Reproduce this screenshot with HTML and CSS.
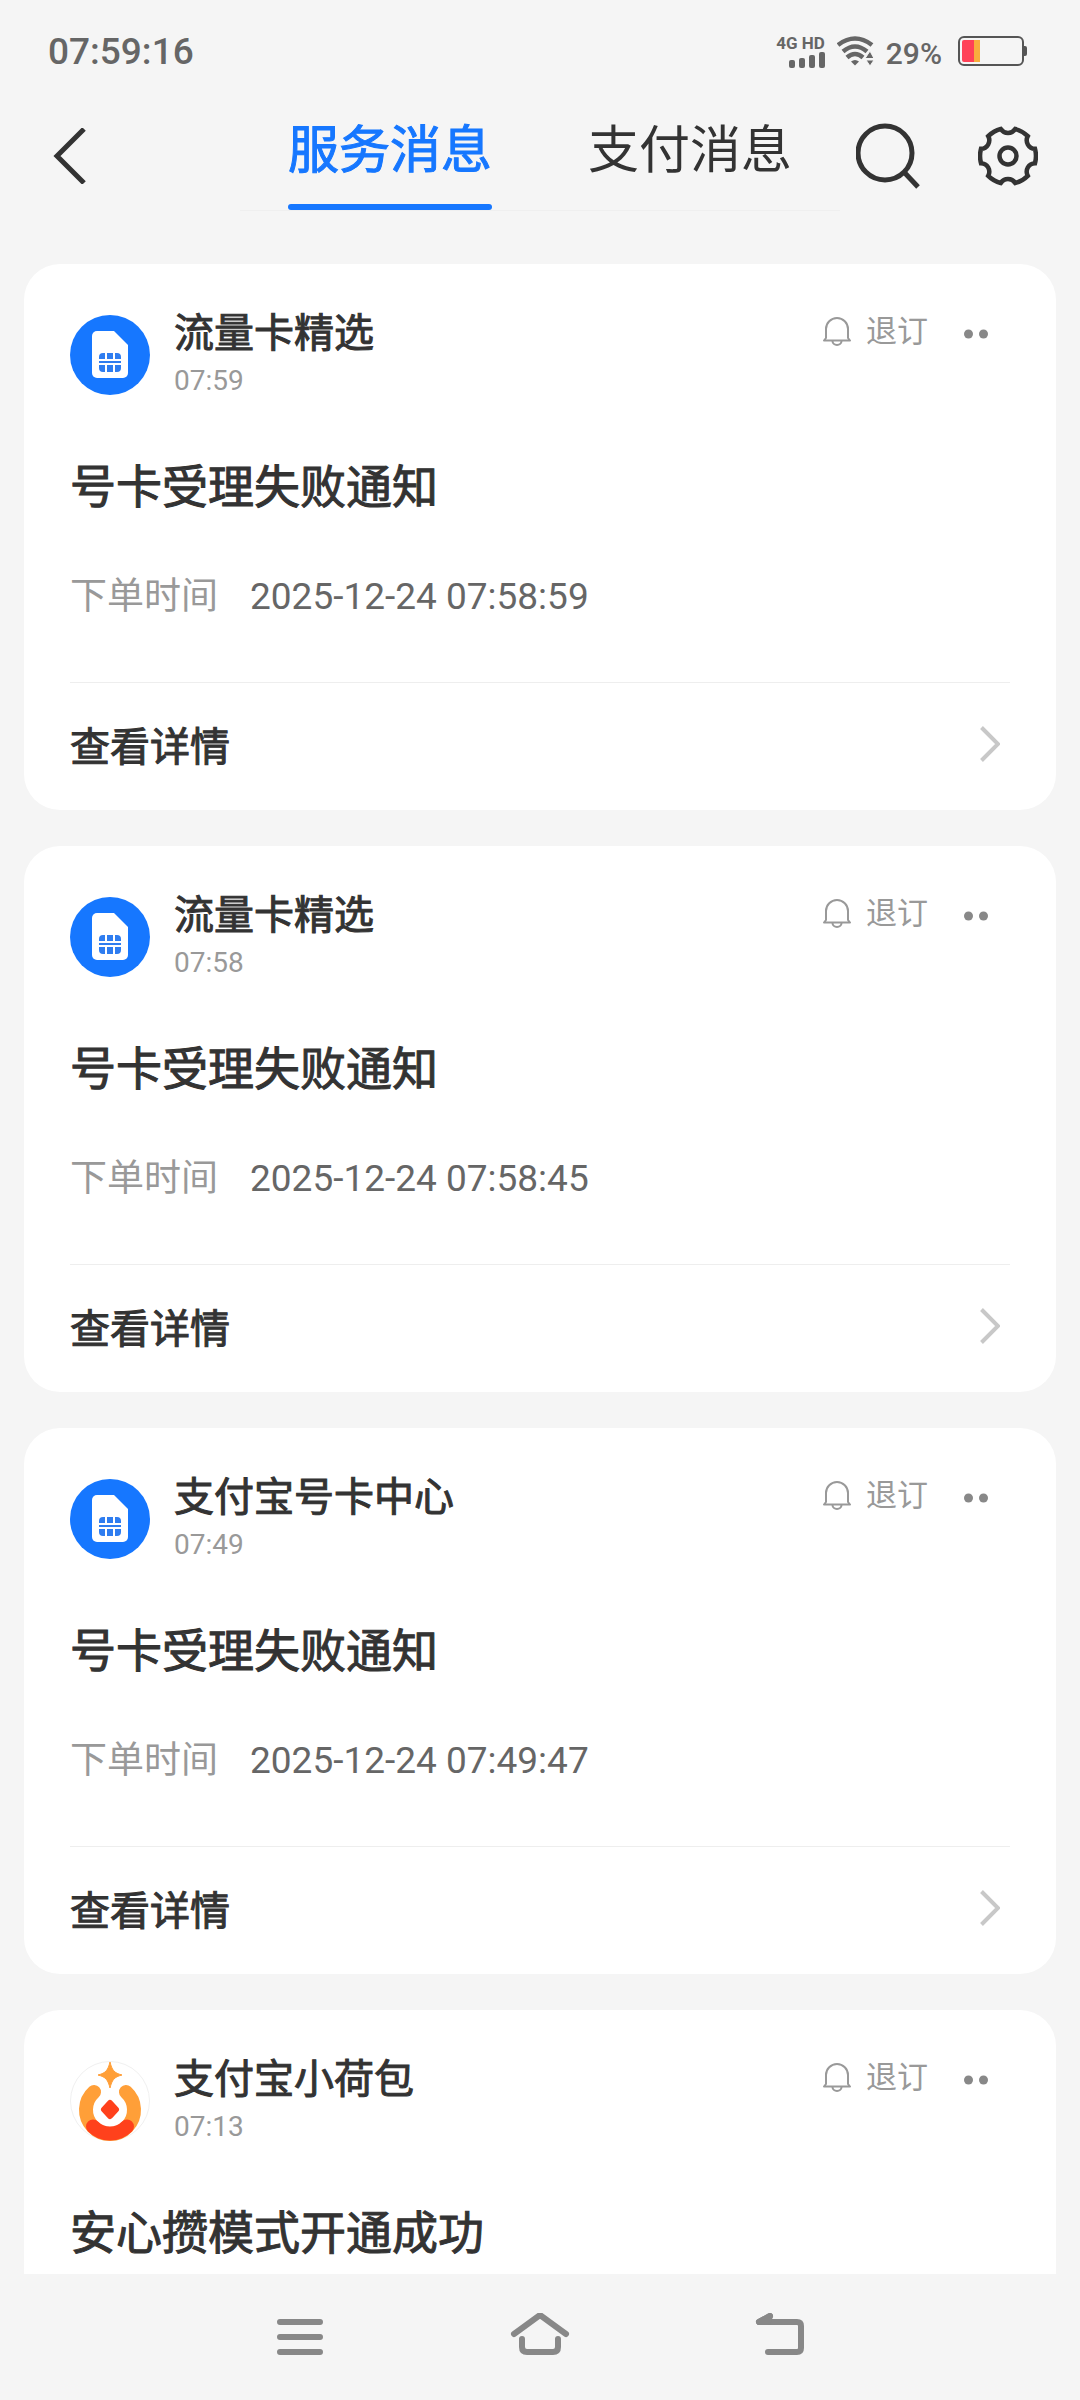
FILE: index.html
```html
<!DOCTYPE html>
<html lang="zh-CN">
<head>
  <meta charset="UTF-8">
  <title>服务消息</title>
  <meta name="viewport" content="width=device-width, initial-scale=1.0">
  <link rel="stylesheet" href="styles.css">
</head>
<body>
  <!-- 共用图标 -->
  <svg class="sprite" aria-hidden="true">
    <symbol id="icon-sim" viewBox="0 0 80 80">
      <circle cx="40" cy="40" r="40" fill="#1677ff"/>
      <path d="M27 16h17l14 14v28a5 5 0 0 1-5 5H27a5 5 0 0 1-5-5V21a5 5 0 0 1 5-5z" fill="#fff"/>
      <path d="M33 38h2v6h-6v-2a4 4 0 0 1 4-4zM37 38h6v6h-6zM45 38h2a4 4 0 0 1 4 4v2h-6zM29 46h22v2H29zM29 50h6v7h-2a4 4 0 0 1-4-4zM37 50h6v7h-6zM45 50h6v3a4 4 0 0 1-4 4h-2z" fill="#2f7df0"/>
    </symbol>
    <symbol id="icon-lotus" viewBox="0 0 80 80">
      <circle cx="40" cy="40" r="39.5" fill="#fff" stroke="#f0f0f0"/>
      <path d="M24 31A24 24 0 1 0 56 31" fill="none" stroke="#ff9f38" stroke-width="14" stroke-linecap="round"/>
      <path d="M23 65.500A24 24 0 0 0 57 65.500" fill="none" stroke="#ff411c" stroke-width="14" stroke-linecap="round"/>
      <path d="M40 1C42 9 44 12 52 14C44 16 42 19 40 27C38 19 36 16 28 14C36 12 38 9 40 1z" fill="#ff9f38" stroke="#ff9f38"/>
      <path d="M40 42l6 6.500-6 6.500-6-6.500z" fill="#ff411c" stroke="#ff411c" stroke-width="6" stroke-linejoin="round"/>
    </symbol>
    <symbol id="icon-bell" viewBox="0 0 28 30">
      <path d="M3 21V12a11 11 0 0 1 22 0v9l2 2.500H1z" fill="none" stroke="#999" stroke-width="2" stroke-linejoin="round"/>
      <path d="M9.500 24a4.500 4 0 0 0 9 0" fill="none" stroke="#999" stroke-width="2"/>
    </symbol>
    <symbol id="icon-dots" viewBox="0 0 24 10">
      <circle cx="4.500" cy="5" r="4.500" fill="#888"/>
      <circle cx="19.500" cy="5" r="4.500" fill="#888"/>
    </symbol>
    <symbol id="icon-arrow" viewBox="0 0 20 36">
      <path d="M1.500 1.500L18 18L1.500 34.500" fill="none" stroke="#c8c8c8" stroke-width="4"/>
    </symbol>
  </svg>

  <!-- 状态栏 -->
  <div class="status-bar">
    <span class="clock">07:59:16</span>
    <div class="signal">
      <span class="network">4G HD</span>
      <svg width="36" height="16" viewBox="0 0 36 16" fill="#666">
        <rect x="0" y="8" width="6" height="8" rx="2"/>
        <rect x="10" y="6" width="6" height="10" rx="2"/>
        <rect x="20" y="3" width="6" height="13" rx="2"/>
        <rect x="30" y="0" width="6" height="16" rx="2"/>
      </svg>
    </div>
    <svg class="wifi" width="37" height="30" viewBox="0 0 37 30">
      <g fill="none" stroke="#666" stroke-width="4.500">
        <path d="M1 9Q18 -4 35 9"/>
        <path d="M6 15.500Q18 5.500 30 15.500"/>
        <path d="M10 21.500Q18 14.500 26 21.500"/>
      </g>
      <path d="M14 25.500Q18 22.500 22 25.500L18 29.500z" fill="#666"/>
      <path d="M28 22.500L33 15L37 22.500zM29 24h8l-4 6z" fill="#666" stroke="#f5f5f5"/>
    </svg>
    <span class="percent">29%</span>
    <svg class="battery" width="70" height="30" viewBox="0 0 70 30">
      <rect x="1" y="1" width="64" height="28" rx="5" fill="none" stroke="#555" stroke-width="2"/>
      <path d="M66 10h1a2 2 0 0 1 2 2v6a2 2 0 0 1-2 2h-1z" fill="#555"/>
      <path d="M6 4h10v22H6a2 2 0 0 1-2-2V6a2 2 0 0 1 2-2z" fill="#ff4257"/>
      <rect x="16" y="4" width="6" height="22" fill="#f9ae3d"/>
    </svg>
  </div>

  <!-- 顶部导航 -->
  <header class="header">
    <button class="back" aria-label="返回">
      <svg width="34" height="56" viewBox="0 0 34 56">
        <path d="M32 1L5 28L32 55" fill="none" stroke="#333" stroke-width="5"/>
      </svg>
    </button>
    <nav class="tabs">
      <a href="#service" class="tab active">服务消息</a>
      <a href="#pay" class="tab">支付消息</a>
    </nav>
    <div class="tools">
      <button aria-label="搜索">
        <svg width="64" height="66" viewBox="0 0 64 66" fill="none" stroke="#333" stroke-width="5">
          <circle cx="29" cy="30" r="27"/>
          <path d="M48 49l14 15"/>
        </svg>
      </button>
      <button aria-label="设置">
        <svg width="60" height="60" viewBox="0 0 60 60" fill="none" stroke="#333" stroke-width="4.500">
          <path d="M57 22.800A28 28 0 0 1 57 37.200A8.500 8.500 0 0 0 49.800 49.800A28 28 0 0 1 37.200 57A8.500 8.500 0 0 0 22.800 57A28 28 0 0 1 10.200 49.800A8.500 8.500 0 0 0 3 37.200A28 28 0 0 1 3 22.800A8.500 8.500 0 0 0 10.200 10.200A28 28 0 0 1 22.800 3A8.500 8.500 0 0 0 37.200 3A28 28 0 0 1 49.800 10.200A8.500 8.500 0 0 0 57 22.800z"/>
          <circle cx="30" cy="30" r="8.500"/>
        </svg>
      </button>
    </div>
  </header>

  <!-- 消息列表 -->
  <main class="list" id="service">
    <article class="card">
      <div class="card-head">
        <svg class="avatar"><use href="#icon-sim"/></svg>
        <div class="sender">
          <h2>流量卡精选</h2>
          <time>07:59</time>
        </div>
        <div class="actions">
          <button class="unsub"><svg class="bell"><use href="#icon-bell"/></svg>退订</button>
          <button class="more" aria-label="更多"><svg><use href="#icon-dots"/></svg></button>
        </div>
      </div>
      <h3>号卡受理失败通知</h3>
      <dl class="info"><dt>下单时间</dt><dd>2025-12-24 07:58:59</dd></dl>
      <a href="#detail" class="detail">查看详情<svg><use href="#icon-arrow"/></svg></a>
    </article>

    <article class="card">
      <div class="card-head">
        <svg class="avatar"><use href="#icon-sim"/></svg>
        <div class="sender">
          <h2>流量卡精选</h2>
          <time>07:58</time>
        </div>
        <div class="actions">
          <button class="unsub"><svg class="bell"><use href="#icon-bell"/></svg>退订</button>
          <button class="more" aria-label="更多"><svg><use href="#icon-dots"/></svg></button>
        </div>
      </div>
      <h3>号卡受理失败通知</h3>
      <dl class="info"><dt>下单时间</dt><dd>2025-12-24 07:58:45</dd></dl>
      <a href="#detail" class="detail">查看详情<svg><use href="#icon-arrow"/></svg></a>
    </article>

    <article class="card">
      <div class="card-head">
        <svg class="avatar"><use href="#icon-sim"/></svg>
        <div class="sender">
          <h2>支付宝号卡中心</h2>
          <time>07:49</time>
        </div>
        <div class="actions">
          <button class="unsub"><svg class="bell"><use href="#icon-bell"/></svg>退订</button>
          <button class="more" aria-label="更多"><svg><use href="#icon-dots"/></svg></button>
        </div>
      </div>
      <h3>号卡受理失败通知</h3>
      <dl class="info"><dt>下单时间</dt><dd>2025-12-24 07:49:47</dd></dl>
      <a href="#detail" class="detail">查看详情<svg><use href="#icon-arrow"/></svg></a>
    </article>

    <article class="card">
      <div class="card-head">
        <svg class="avatar"><use href="#icon-lotus"/></svg>
        <div class="sender">
          <h2>支付宝小荷包</h2>
          <time>07:13</time>
        </div>
        <div class="actions">
          <button class="unsub"><svg class="bell"><use href="#icon-bell"/></svg>退订</button>
          <button class="more" aria-label="更多"><svg><use href="#icon-dots"/></svg></button>
        </div>
      </div>
      <h3>安心攒模式开通成功</h3>
    </article>
  </main>

  <!-- 系统导航键 -->
  <nav class="bottom-nav">
    <button aria-label="菜单">
      <svg width="60" height="48" viewBox="0 0 60 48"><path d="M10 9h40M10 24h40M10 39h40"/></svg>
    </button>
    <button aria-label="主页">
      <svg width="60" height="48" viewBox="0 0 60 48"><path d="M4 21L30 2L56 21M12 26v8q0 5 5 5h26q5 0 5-5v-8"/></svg>
    </button>
    <button aria-label="返回上一页">
      <svg width="60" height="48" viewBox="0 0 60 48"><path d="M20 3L9 9h38q4 0 4 4v22q0 4-4 4H18"/><path d="M20 3L9 9h9z"/></svg>
    </button>
  </nav>
</body>
</html>
```
FILE: styles.css
```css
/* 基础 */
* {
  box-sizing: border-box;
}
body {
  margin: 0;
  height: 100vh;
  display: flex;
  flex-direction: column;
  overflow: hidden;
  background: #f5f5f5;
  color: #333;
  font-family: Roboto, "Noto Sans CJK SC", sans-serif;
}
h2, h3, dl, dd {
  margin: 0;
}
svg {
  display: block;
}
button {
  padding: 0;
  border: none;
  background: none;
  color: inherit;
  font: inherit;
  cursor: pointer;
}
a {
  color: inherit;
  text-decoration: none;
}
.sprite {
  position: absolute;
  width: 0;
  height: 0;
}

/* 状态栏 */
.status-bar {
  display: flex;
  align-items: center;
  flex: none;
  height: 96px;
  padding: 6px 52px 0 48px;
  color: #666;
  font-weight: 500;
}
.clock {
  margin-right: auto;
  font-size: 37px;
}
.signal {
  display: flex;
  flex-direction: column;
  align-items: flex-end;
  margin-right: 12px;
}
.network {
  font-size: 17px;
  line-height: 18px;
  font-weight: 700;
}
.percent {
  margin: 4px 16px 0 12px;
  font-size: 30px;
}

/* 顶部导航 */
.header {
  display: grid;
  grid-template-columns: 240px 1fr 240px;
  flex: none;
  height: 120px;
}
.back {
  display: flex;
  align-items: center;
  padding-left: 52px;
}
.tabs {
  display: flex;
  align-self: start;
  border-bottom: 1px solid #efefef;
}
.tab {
  flex: 1;
  display: flex;
  flex-direction: column;
  align-items: center;
  gap: 22px;
  padding-top: 24px;
  font-size: 51px;
  line-height: 62px;
}
.tab::after {
  content: "";
  width: 204px;
  height: 6px;
  border-radius: 3px;
}
.tab.active {
  color: #1677ff;
}
.tab.active::after {
  background: #1677ff;
}
.tools {
  display: flex;
  align-items: center;
  justify-content: flex-end;
  gap: 58px;
  padding-right: 42px;
}

/* 中等字重 */
.tab.active,
.sender h2,
.card h3,
.detail {
  font-weight: 400;
  -webkit-text-stroke: 1px currentColor;
}

/* 消息卡片 */
.list {
  display: flex;
  flex-direction: column;
  flex: 1;
  gap: 36px;
  min-height: 0;
  padding: 48px 24px 0;
  overflow: hidden;
}
.card {
  flex: none;
  padding: 44px 46px 0;
  border-radius: 36px;
  background: #fff;
}
.card:last-child {
  padding-bottom: 60px;
}
.card-head {
  display: flex;
  align-items: center;
  height: 94px;
}
.avatar {
  width: 80px;
  height: 80px;
  margin-right: 24px;
}
.sender h2 {
  font-size: 40px;
  line-height: 52px;
}
.sender time {
  display: block;
  color: #999;
  font-size: 28px;
  line-height: 42px;
}
.actions {
  display: flex;
  align-items: center;
  align-self: flex-start;
  gap: 36px;
  height: 48px;
  margin-left: auto;
  padding-right: 22px;
}
.unsub {
  display: flex;
  align-items: center;
  gap: 15px;
  color: #999;
  font-size: 31px;
  line-height: 48px;
}
.bell {
  width: 28px;
  height: 30px;
}
.more {
  padding-top: 4px;
}
.more svg {
  width: 24px;
  height: 10px;
}
.card h3 {
  margin-top: 54px;
  font-size: 46px;
  line-height: 62px;
}
.info {
  display: flex;
  gap: 32px;
  margin-top: 54px;
  font-size: 37px;
  line-height: 50px;
}
.info dt {
  color: #999;
}
.info dd {
  color: #666;
}
.detail {
  display: flex;
  align-items: center;
  justify-content: space-between;
  height: 128px;
  margin-top: 60px;
  padding: 0 10px 6px 0;
  border-top: 1px solid #eee;
  font-size: 40px;
}
.detail svg {
  width: 20px;
  height: 36px;
}

/* 系统导航键 */
.bottom-nav {
  display: flex;
  align-items: center;
  justify-content: center;
  flex: none;
  gap: 180px;
  height: 126px;
}
.bottom-nav path {
  fill: none;
  stroke: #888;
  stroke-width: 6;
  stroke-linecap: round;
  stroke-linejoin: round;
}
```
